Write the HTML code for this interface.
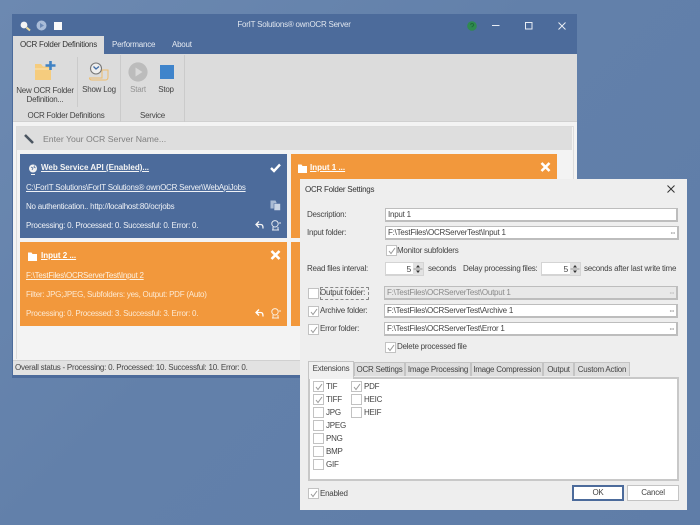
<!DOCTYPE html>
<html><head><meta charset="utf-8">
<style>
html,body{margin:0;padding:0}
body{width:700px;height:525px;overflow:hidden;position:relative;background:linear-gradient(135deg,#6c89b1 0%,#6280aa 45%,#5f7da8 100%);font-family:"Liberation Sans",sans-serif;font-size:8px;letter-spacing:-.24px;color:#444}
#w{position:absolute;left:0;top:0;width:700px;height:525px;filter:blur(.35px)}
.b{position:absolute;box-sizing:border-box}
.t{position:absolute;white-space:nowrap;line-height:12px;height:12px}
.c{text-align:center}
.u{text-decoration:underline}
.i{position:absolute;box-sizing:border-box;background:#fff;border:1px solid #bdbdbd;border-width:1px 2px 2px 1px;height:14px;line-height:12px;padding-left:2px;color:#444;white-space:nowrap;overflow:hidden}
.d{position:absolute;right:2px;top:0;font-size:4px;color:#666;line-height:12px;letter-spacing:0}
.k{position:absolute;box-sizing:border-box;width:11px;height:11px;background:#fff;border:1px solid #c2c2c2}
.k.on svg{position:absolute;left:1px;top:1px}
.tb{position:absolute;box-sizing:border-box;top:362px;height:14px;background:#dedede;border:1px solid #c4c4c4;border-bottom:0;text-align:center;line-height:14px;color:#444;white-space:nowrap}
svg{position:absolute;overflow:visible}
.w{color:#eef1f6}
.bd{font-weight:bold;font-size:8px;letter-spacing:0}
</style></head><body><div id="w">

<!-- main window -->
<div class="b" style="left:12px;top:14px;width:565px;height:364px;background:#4c6b9b"></div>
<div class="b" style="left:13px;top:54px;width:564px;height:68px;background:#dcdcdc;border-bottom:1px solid #d0d0d0"></div>
<div class="b" style="left:13px;top:122px;width:564px;height:238px;background:#f3f3f3"></div>
<div class="b" style="left:13px;top:360px;width:564px;height:15px;background:#e2e2e2;border-top:1px solid #d0d0d0"></div>

<!-- title bar -->
<svg style="left:19px;top:20px" width="12" height="12" viewBox="0 0 12 12"><circle cx="5" cy="5" r="3.4" fill="#f4f4f4"/><path d="M7.5 7.5L11 10.500" stroke="#efdc9c" stroke-width="2"/></svg>
<svg style="left:36px;top:20px" width="11" height="11" viewBox="0 0 11 11"><circle cx="5.5" cy="5.5" r="5" fill="#a9bcd8"/><path d="M4 3l4 2.5L4 8z" fill="#6d8ab5"/></svg>
<div class="b" style="left:54px;top:22px;width:8px;height:8px;background:#fafafa"></div>
<div class="t c" style="left:179px;top:19px;width:230px;color:#dfe5ee">ForIT Solutions® ownOCR Server</div>
<svg style="left:467px;top:21px" width="10" height="10" viewBox="0 0 10 10"><circle cx="5" cy="5" r="4.8" fill="#2f8a4f"/><path d="M3.6 3.8a1.5 1.4 0 1 1 2 1.4c-.5.2-.6.5-.6 1" stroke="#1f6a3a" fill="none"/></svg>
<svg style="left:492px;top:20px" width="100" height="12" viewBox="0 0 100 12"><path d="M0 5.5h7.5" stroke="#e8edf4" stroke-width="1"/><rect x="33.5" y="2.5" width="6.5" height="6.5" fill="none" stroke="#e8edf4"/><path d="M66.5 2.5l7 7M73.5 2.5l-7 7" stroke="#e8edf4"/></svg>

<!-- tabs -->
<div class="b" style="left:13px;top:36px;width:91px;height:18px;background:#dcdcdc"></div>
<div class="t c" style="left:13px;top:39px;width:91px;color:#333">OCR Folder Definitions</div>
<div class="t" style="left:112px;top:39px;color:#e4e9f1">Performance</div>
<div class="t" style="left:172px;top:39px;color:#e4e9f1">About</div>

<!-- ribbon -->
<div class="b" style="left:77px;top:57px;width:1px;height:50px;background:#cbcbcb"></div>
<div class="b" style="left:120px;top:55px;width:1px;height:67px;background:#cbcbcb"></div>
<div class="b" style="left:184px;top:55px;width:1px;height:67px;background:#cbcbcb"></div>
<svg style="left:35px;top:61px" width="21" height="20" viewBox="0 0 21 20"><path d="M0 3h6l2 2.500h8V19H0z" fill="#f5cc7e"/><path d="M0 8h17" stroke="#fbe3b4"/><path d="M10.500 4.500H20.500M15.500 0v9" stroke="#3f82c4" stroke-width="2.600"/></svg>
<svg style="left:88px;top:62px" width="22" height="20" viewBox="0 0 22 20"><path d="M11 8h9v7c0 2-1 3-2.500 3H4c-1.500 0-2.500-.8-2.500-2H14V8" fill="none" stroke="#eebd6d" stroke-width="1"/><circle cx="8" cy="6.500" r="5.500" fill="#eee" stroke="#777" stroke-width="1.100"/><path d="M5.500 4.500L8 7l3-2.500" stroke="#3f6da8" stroke-width="1.300" fill="none"/></svg>
<div class="t c" style="left:13px;top:86px;width:64px;line-height:9px;height:20px">New OCR Folder<br>Definition...</div>
<div class="t c" style="left:78px;top:84px;width:42px">Show Log</div>
<svg style="left:128px;top:62px" width="20" height="20" viewBox="0 0 20 20"><circle cx="10" cy="10" r="9.600" fill="#bcbcbc"/><path d="M7.500 5.500l7 4.500-7 4.500z" fill="#d9d9d9"/></svg>
<div class="b" style="left:160px;top:65px;width:14px;height:14px;background:#3f84cb"></div>
<div class="t c" style="left:124px;top:84px;width:28px;color:#939393">Start</div>
<div class="t c" style="left:152px;top:84px;width:28px">Stop</div>
<div class="t c" style="left:13px;top:110px;width:106px">OCR Folder Definitions</div>
<div class="t c" style="left:121px;top:110px;width:63px">Service</div>

<!-- name box -->
<div class="b" style="left:16px;top:126px;width:558px;height:233px;border:1px solid #dcdcdc;border-bottom:0"></div>
<div class="b" style="left:17px;top:127px;width:555px;height:23px;background:#dedede"></div>
<svg style="left:24px;top:134px" width="10" height="10" viewBox="0 0 10 10"><path d="M1 1l8 8" stroke="#4b5560" stroke-width="2.600"/></svg>
<div class="t" style="left:43px;top:133px;color:#808080;font-size:8.700px;letter-spacing:0">Enter Your OCR Server Name...</div>

<!-- cards -->
<div class="b" style="left:20px;top:154px;width:267px;height:84px;background:#4c6b9b"></div>
<div class="b" style="left:291px;top:154px;width:266px;height:84px;background:#f2983c"></div>
<div class="b" style="left:20px;top:242px;width:267px;height:84px;background:#f2983c"></div>
<div class="b" style="left:291px;top:242px;width:266px;height:84px;background:#f2983c"></div>

<svg style="left:28px;top:164px" width="10" height="11" viewBox="0 0 10 11"><circle cx="5" cy="4.500" r="4" fill="#f0f0f0"/><path d="M3 3l2 1-1 2M6.500 1.500L6 3l1.500 1" stroke="#4c6b9b" fill="none" stroke-width=".8"/><path d="M3 10.500h4" stroke="#f0f0f0"/></svg>
<div class="t u bd" style="left:41px;top:162px;color:#f4f4f4">Web Service API (Enabled)...</div>
<svg style="left:270px;top:163px" width="11" height="10" viewBox="0 0 11 10"><path d="M1 5l3 3 6-6.500" stroke="#fff" stroke-width="2.400" fill="none"/></svg>
<div class="t u w" style="left:26px;top:182px">C:\ForIT Solutions\ForIT Solutions® ownOCR Server\WebApiJobs</div>
<div class="t w" style="left:26px;top:201px">No authentication.. http://localhost:80/ocrjobs</div>
<svg style="left:270px;top:200px" width="11" height="11" viewBox="0 0 11 11"><path d="M.5.500h5l1 2v6h-6z" fill="#a9bbd4"/><path d="M4 3.500h6.500v7H4z" fill="#c9d5e5" stroke="#4c6b9b" stroke-width=".6"/></svg>
<div class="t w" style="left:26px;top:220px">Processing: 0. Processed: 0. Successful: 0. Error: 0.</div>
<svg style="left:255px;top:220px" width="27" height="11" viewBox="0 0 27 11"><path d="M4 1.500L1 4.500 4 7.500M1 4.500h4.500c2 0 2.500 1 2.500 4" stroke="#f4f4f4" stroke-width="1.300" fill="none"/><circle cx="20" cy="3.800" r="3.200" fill="none" stroke="#e4e9f1"/><path d="M17 10h7M18 7v3M23 7v3M24 3h2" stroke="#e4e9f1" fill="none"/></svg>

<svg style="left:28px;top:252px" width="9" height="9" viewBox="0 0 9 9"><path d="M0 .5h3.500L4.500 2H9v7H0z" fill="#fff"/></svg>
<div class="t u bd" style="left:41px;top:250px;color:#fff">Input 2 ...</div>
<svg style="left:270px;top:250px" width="11" height="10" viewBox="0 0 11 10"><path d="M1.500 1l8 8M9.500 1l-8 8" stroke="#fff" stroke-width="2.600"/></svg>
<div class="t u" style="left:26px;top:270px;color:#fdf1e0">F:\TestFiles\OCRServerTest\Input 2</div>
<div class="t" style="left:26px;top:289px;color:#fce9d2">Filter: JPG;JPEG, Subfolders: yes, Output: PDF (Auto)</div>
<div class="t" style="left:26px;top:308px;color:#fce9d2">Processing: 0. Processed: 3. Successful: 3. Error: 0.</div>
<svg style="left:255px;top:308px" width="27" height="11" viewBox="0 0 27 11"><path d="M4 1.500L1 4.500 4 7.500M1 4.500h4.500c2 0 2.500 1 2.500 4" stroke="#fff" stroke-width="1.300" fill="none"/><circle cx="20" cy="3.800" r="3.200" fill="none" stroke="#fbeede"/><path d="M17 10h7M18 7v3M23 7v3M24 3h2" stroke="#fbeede" fill="none"/></svg>

<svg style="left:298px;top:164px" width="9" height="9" viewBox="0 0 9 9"><path d="M0 .5h3.500L4.500 2H9v7H0z" fill="#fff"/></svg>
<div class="t u bd" style="left:310px;top:162px;color:#fff">Input 1 ...</div>
<svg style="left:540px;top:162px" width="11" height="10" viewBox="0 0 11 10"><path d="M1.500 1l8 8M9.500 1l-8 8" stroke="#fff" stroke-width="2.600"/></svg>

<div class="t" style="left:15px;top:362px">Overall status - Processing: 0. Processed: 10. Successful: 10. Error: 0.</div>

<!-- dialog -->
<div class="b" style="left:300px;top:179px;width:387px;height:331px;background:#eeeeee"></div>
<div class="t" style="left:305px;top:184px;color:#333">OCR Folder Settings</div>
<svg style="left:667px;top:185px" width="8" height="8" viewBox="0 0 8 8"><path d="M.5.500l7 7M7.500.500l-7 7" stroke="#333" stroke-width="1"/></svg>

<div class="t" style="left:307px;top:209px">Description:</div>
<div class="i" style="left:385px;top:208px;width:293px">Input 1</div>
<div class="t" style="left:307px;top:227px">Input folder:</div>
<div class="i" style="left:385px;top:226px;width:294px">F:\TestFiles\OCRServerTest\Input 1<span class="d">•••</span></div>
<div class="k on" style="left:386px;top:245px"><svg width="8" height="8" viewBox="0 0 8 8"><path d="M1 4l2 2.500L7 1" stroke="#999" fill="none"/></svg></div>
<div class="t" style="left:397px;top:245px">Monitor subfolders</div>
<div class="t" style="left:307px;top:263px">Read files interval:</div>
<div class="i" style="left:385px;top:262px;width:39px;padding-right:11px;text-align:right;padding-left:0;border-color:#d4d4d4;font-size:8.500px">5</div>
<svg style="left:413px;top:263px" width="10" height="12" viewBox="0 0 10 12"><rect width="10" height="12" fill="#e2e2e2"/><path d="M.5 6h9" stroke="#999"/><path d="M5 2l2 2.500H3zM5 10L3 7.500h4z" fill="#333"/></svg>
<div class="t" style="left:428px;top:263px">seconds</div>
<div class="t" style="left:463px;top:263px">Delay processing files:</div>
<div class="i" style="left:541px;top:262px;width:40px;padding-right:11px;text-align:right;padding-left:0;border-color:#d4d4d4;font-size:8.500px">5</div>
<svg style="left:570px;top:263px" width="10" height="12" viewBox="0 0 10 12"><rect width="10" height="12" fill="#e2e2e2"/><path d="M.5 6h9" stroke="#999"/><path d="M5 2l2 2.500H3zM5 10L3 7.500h4z" fill="#333"/></svg>
<div class="t" style="left:584px;top:263px">seconds after last write time</div>

<div class="k" style="left:308px;top:288px"></div>
<div class="b" style="left:320px;top:287px;width:49px;height:13px;border:1px dashed #888"></div>
<div class="t" style="left:320px;top:287px">Output folder:</div>
<div class="i" style="left:384px;top:286px;width:294px;background:#e8e8e8;color:#8a8a8a">F:\TestFiles\OCRServerTest\Output 1<span class="d" style="color:#aaa">•••</span></div>
<div class="k on" style="left:308px;top:306px"><svg width="8" height="8" viewBox="0 0 8 8"><path d="M1 4l2 2.500L7 1" stroke="#999" fill="none"/></svg></div>
<div class="t" style="left:320px;top:305px">Archive folder:</div>
<div class="i" style="left:384px;top:304px;width:294px">F:\TestFiles\OCRServerTest\Archive 1<span class="d">•••</span></div>
<div class="k on" style="left:308px;top:324px"><svg width="8" height="8" viewBox="0 0 8 8"><path d="M1 4l2 2.500L7 1" stroke="#999" fill="none"/></svg></div>
<div class="t" style="left:320px;top:323px">Error folder:</div>
<div class="i" style="left:384px;top:322px;width:294px">F:\TestFiles\OCRServerTest\Error 1<span class="d">•••</span></div>
<div class="k on" style="left:385px;top:342px"><svg width="8" height="8" viewBox="0 0 8 8"><path d="M1 4l2 2.500L7 1" stroke="#999" fill="none"/></svg></div>
<div class="t" style="left:397px;top:341px">Delete processed file</div>

<!-- tab panel -->
<div class="b" style="left:308px;top:377px;width:371px;height:104px;background:#fff;border:2px solid #c8c8c8"></div>
<div class="tb" style="left:308px;top:361px;width:46px;height:18px;background:#f0f0f0;z-index:2">Extensions</div>
<div class="tb" style="left:354px;width:51px">OCR Settings</div>
<div class="tb" style="left:405px;width:66px">Image Processing</div>
<div class="tb" style="left:471px;width:72px">Image Compression</div>
<div class="tb" style="left:543px;width:31px">Output</div>
<div class="tb" style="left:574px;width:56px">Custom Action</div>

<div class="k on" style="left:313px;top:381px"><svg width="8" height="8" viewBox="0 0 8 8"><path d="M1 4l2 2.500L7 1" stroke="#999" fill="none"/></svg></div><div class="t" style="left:326px;top:381px">TIF</div>
<div class="k on" style="left:313px;top:394px"><svg width="8" height="8" viewBox="0 0 8 8"><path d="M1 4l2 2.500L7 1" stroke="#999" fill="none"/></svg></div><div class="t" style="left:326px;top:394px">TIFF</div>
<div class="k" style="left:313px;top:407px"></div><div class="t" style="left:326px;top:407px">JPG</div>
<div class="k" style="left:313px;top:420px"></div><div class="t" style="left:326px;top:420px">JPEG</div>
<div class="k" style="left:313px;top:433px"></div><div class="t" style="left:326px;top:433px">PNG</div>
<div class="k" style="left:313px;top:446px"></div><div class="t" style="left:326px;top:446px">BMP</div>
<div class="k" style="left:313px;top:459px"></div><div class="t" style="left:326px;top:459px">GIF</div>
<div class="k on" style="left:351px;top:381px"><svg width="8" height="8" viewBox="0 0 8 8"><path d="M1 4l2 2.500L7 1" stroke="#999" fill="none"/></svg></div><div class="t" style="left:364px;top:381px">PDF</div>
<div class="k" style="left:351px;top:394px"></div><div class="t" style="left:364px;top:394px">HEIC</div>
<div class="k" style="left:351px;top:407px"></div><div class="t" style="left:364px;top:407px">HEIF</div>

<div class="k on" style="left:308px;top:488px"><svg width="8" height="8" viewBox="0 0 8 8"><path d="M1 4l2 2.500L7 1" stroke="#999" fill="none"/></svg></div>
<div class="t" style="left:320px;top:488px">Enabled</div>
<div class="b c" style="left:572px;top:485px;width:52px;height:16px;background:#fff;border:2px solid #4c6b9b;line-height:12px">OK</div>
<div class="b c" style="left:627px;top:485px;width:52px;height:16px;background:#fff;border:1px solid #c4c4c4;line-height:14px">Cancel</div>

</div></body></html>
